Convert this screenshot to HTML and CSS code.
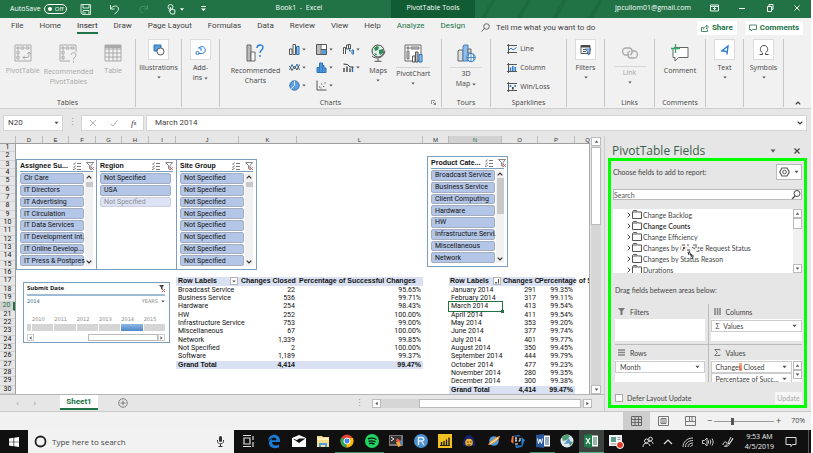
FILE: index.html
```
<!DOCTYPE html>
<html lang="en">
<head>
<meta charset="utf-8">
<meta name="viewport" content="width=device-width, initial-scale=1">
<title>Book1 - Excel</title>
<link rel="stylesheet" href="styles.css">
</head>
<body>

<!-- shared icons -->
<svg class="defs" aria-hidden="true">
	<symbol id="i-multi" viewBox="0 0 8 8"><path d="M0 1.500l1 1 1.500-2M0 4.500l1 1 1.500-2M0 7l1 .8 1.500-1.800M4 1.500h4M4 4.500h4M4 7.500h4" fill="none" stroke="#555" stroke-width=".8"/></symbol>
	<symbol id="i-clear" viewBox="0 0 8 8"><path d="M.5.5h7L5 3.500v4L3.500 6.500v-3z" fill="none" stroke="#666" stroke-width=".8"/><path d="M5 5l3 3M8 5L5 8" stroke="#d66" stroke-width=".9"/></symbol>
	<symbol id="i-folder" viewBox="0 0 10 9"><path d="M.5 8.500v-7l1-1h3l1 1.500h4v6.500z" fill="#fff" stroke="#555"/><path d="M1 2h4" stroke="#555"/></symbol>
	<symbol id="i-next" viewBox="0 0 4 6"><path d="M.7.7L3 3 .7 5.300" fill="none" stroke="#444" stroke-width="1"/></symbol>
	<symbol id="i-up" viewBox="0 0 6 4"><path d="M.7 3.300L3 1l2.300 2.300" fill="none" stroke="#333" stroke-width="1.200"/></symbol>
	<symbol id="i-down" viewBox="0 0 6 4"><path d="M.7.7L3 3 5.300.7" fill="none" stroke="#333" stroke-width="1.200"/></symbol>
	<symbol id="i-caret" viewBox="0 0 6 4"><path d="M.5.500h5L3 3.500z" fill="#555"/></symbol>
	<symbol id="i-caretup" viewBox="0 0 6 4"><path d="M.5 3.500h5L3 .5z" fill="#555"/></symbol>
	<symbol id="i-left" viewBox="0 0 4 6"><path d="M3.500.5v5L.5 3z" fill="#555"/></symbol>
	<symbol id="i-right" viewBox="0 0 4 6"><path d="M.5.500v5L3.500 3z" fill="#555"/></symbol>
</svg>

<div class="app">

<header class="titlebar">
	<div class="quick">
		<label class="autosave">AutoSave <input type="checkbox" role="switch"><span class="switch">Off</span></label>
		<button aria-label="Save"><svg width="12" height="11" viewBox="0 0 12 11"><path d="M1 .5h9.500v10H2.500L1 9zM3 .5v3.500h6V.5M3 10.500V6.500h6v4M5 10V8" fill="none" stroke="#cfe5d8"/></svg></button>
		<button aria-label="Undo"><svg width="12" height="11" viewBox="0 0 12 11"><path d="M1.500 1v4h4M1.500 5C4 1 9.500 1 9.500 5c0 2-2 3.500-4 5" fill="none" stroke="#dceee3"/></svg></button>
		<button aria-label="Redo"><svg width="12" height="11" viewBox="0 0 12 11"><path d="M9.500 1v4h-4M9.500 5C7 1 2 2 2 5c0 2 1 3 3 4" fill="none" stroke="#4a9069"/></svg></button>
		<button class="touch" aria-label="Touch mode"><svg width="9" height="11" viewBox="0 0 9 11"><circle cx="3.500" cy="3" r="2.500" fill="none" stroke="#dceee3"/><path d="M3.500 3v4L2 6.500l2 3.500h3.500L8 6 3.500 5" fill="none" stroke="#dceee3"/></svg><svg width="4" height="3" viewBox="0 0 6 4"><path d="M0 0h6L3 4z" fill="#fff"/></svg></button>
		<button aria-label="Customize"><svg width="5" height="6" viewBox="0 0 5 6"><path d="M0 .5h5" stroke="#fff"/><path d="M0 2.500h5L2.500 5z" fill="#fff"/></svg></button>
	</div>
	<h1 class="doc">Book1&nbsp; - &nbsp;Excel</h1>
	<div class="context">PivotTable Tools</div>
	<div class="stripes"></div>
	<div class="account">jpcullom01@gmail.com</div>
	<div class="window">
		<button aria-label="Ribbon display"><svg width="9" height="8" viewBox="0 0 9 8"><path d="M.5 1h8v6h-8zM.5 2.500h8M4.500 6V3.500M3 5l1.500-1.500L6 5" fill="none" stroke="#e6f2eb"/></svg></button>
		<button aria-label="Minimize"><svg width="8" height="8" viewBox="0 0 8 8"><path d="M1 4.500h6" stroke="#fff"/></svg></button>
		<button aria-label="Restore"><svg width="8" height="8" viewBox="0 0 8 8"><path d="M1.500 2.500h4v5h-4zM3 2.500v-2h4v5H5.500" fill="none" stroke="#fff"/></svg></button>
		<button aria-label="Close"><svg width="8" height="8" viewBox="0 0 8 8"><path d="M1.500 1.500l5 5M6.500 1.500l-5 5" stroke="#fff"/></svg></button>
	</div>
</header>

<nav class="tabs">
	<a href="#file">File</a>
	<a href="#home">Home</a>
	<a href="#insert" class="active">Insert</a>
	<a href="#draw">Draw</a>
	<a href="#layout">Page Layout</a>
	<a href="#formulas">Formulas</a>
	<a href="#data">Data</a>
	<a href="#review">Review</a>
	<a href="#view">View</a>
	<a href="#help">Help</a>
	<a href="#analyze" class="tool">Analyze</a>
	<a href="#design" class="tool">Design</a>
	<button class="tellme"><svg width="9" height="9" viewBox="0 0 9 9"><circle cx="5.500" cy="3.500" r="2.800" fill="none" stroke="#555" stroke-width=".9"/><path d="M3.500 5.500L.5 8.500" stroke="#555"/></svg>Tell me what you want to do</button>
	<span class="grow"></span>
	<button class="pill"><svg width="8" height="8" viewBox="0 0 8 8"><path d="M2.500 3.500h-2v4h6v-2M2.500 5.500c0-2 1.500-3 3-3V1l2 2-2 2V3.500" fill="none" stroke="#217346" stroke-width=".8"/></svg>Share</button>
	<button class="pill"><svg width="8" height="8" viewBox="0 0 8 8"><path d="M.5 1h7v4.500H3.500L2 7V5.500H.5z" fill="none" stroke="#217346" stroke-width=".8"/></svg>Comments</button>
</nav>

<section class="ribbon" aria-label="Insert">
	<div class="group">
		<div class="tools tables">
			<button class="tool-btn off"><svg width="18" height="18" viewBox="0 0 18 18"><path d="M1 1h16v16H1zM3 3h2v2H3zM7 3h3v2H7zM12 3h3v2h-3zM3 7h2v3H3zM3 12h2v3H3zM9 13.500h4c2 0 2-2 2-5M13 10l2-2 2 2M11 11.500l-2 2 2 2" fill="none" stroke="#a9a9a9"/></svg>PivotTable</button>
			<button class="tool-btn off"><svg width="19" height="19" viewBox="0 0 19 19"><path d="M11 17H1V1h16v7M3 3h2v2H3zM7 3h3v2H7zM12 3h3v2h-3zM3 7h2v3H3zM3 12h2v3H3zM12 11c0-3 5-3 5 0 0 2-2.500 2-2.500 4.500M14.500 17v1.500" fill="none" stroke="#a9a9a9"/></svg>Recommended<br>PivotTables</button>
			<button class="tool-btn off"><svg width="18" height="18" viewBox="0 0 18 18"><path d="M1 1h16v3H1z" fill="#aaa"/><path d="M1 1h16v16H1zM1 5h16M1 9h16M1 13h16M5 4v13M9 4v13M13 4v13" fill="none" stroke="#a9a9a9"/></svg>Table</button>
		</div>
		<h2>Tables</h2>
	</div>
	<div class="group">
		<button class="tool-btn boxed"><span class="box"><svg width="12" height="12" viewBox="0 0 12 12"><path d="M1 1h7v6H1z" fill="#5b9bd9" stroke="#2b73b8"/><circle cx="7.500" cy="7.500" r="3.500" fill="#fff" stroke="#555"/></svg></span>Illustrations<svg class="car"><use href="#i-caret"/></svg></button>
	</div>
	<div class="group">
		<button class="tool-btn boxed"><span class="box"><svg width="12" height="12" viewBox="0 0 12 12"><path d="M4 4a3.500 3.500 0 1 1 3.500 5.500H3M3 4h3v3" fill="none" stroke="#2b7cd3"/><circle cx="2.500" cy="9" r="1.600" fill="#fff" stroke="#2b7cd3"/></svg></span>Add-<br><span class="word">ins <svg class="car"><use href="#i-caret"/></svg></span></button>
	</div>
	<div class="group">
		<div class="tools charts">
			<button class="tool-btn"><svg width="18" height="18" viewBox="0 0 18 18"><path d="M1 1h4v16H1z" fill="#bbb" stroke="#666"/><path d="M5 8h4v9H5z" fill="#fff" stroke="#666"/><path d="M11 4c0-4 6-4 6-.500 0 2.500-3 2.500-3 5.500M14 11v2" fill="none" stroke="#2b7cd3" stroke-width="1.400"/></svg>Recommended<br>Charts</button>
			<div class="minis">
				<button aria-label="Column chart"><svg width="11" height="11" viewBox="0 0 11 11"><path d="M.5 5h2.500v5.500H.5z" fill="#fff" stroke="#555"/><path d="M4 .5h2.500v10H4z" fill="#fff" stroke="#555"/><path d="M7.500 2.500H10v8H7.500z" fill="#8dbdec" stroke="#2b73b8"/></svg><svg class="car"><use href="#i-caret"/></svg></button>
				<button aria-label="Hierarchy chart"><svg width="11" height="11" viewBox="0 0 11 11"><path d="M.5.5h10v10H.5z" fill="#fff" stroke="#555"/><path d="M1 1h3.500v9H1z" fill="#bbb"/><path d="M5.500 6H10v4H5.500z" fill="#5b9bd9"/><path d="M5 .5v10M5 5.500h5.500" stroke="#555"/></svg><svg class="car"><use href="#i-caret"/></svg></button>
				<button aria-label="Waterfall chart"><svg width="11" height="11" viewBox="0 0 11 11"><path d="M.5 10V3.500H2.500V10M3.500 1h2v4h-2z" fill="#fff" stroke="#555"/><path d="M6.500 4v3H8M9 6h1.500v4H9z" fill="none" stroke="#2b73b8"/><path d="M5 .5h2.500V5" fill="none" stroke="#555"/></svg><svg class="car"><use href="#i-caret"/></svg></button>
				<button aria-label="Line chart"><svg width="11" height="11" viewBox="0 0 11 11"><path d="M.5 8L3 2.500 5.500 7 8 2l2.500 6" fill="none" stroke="#2b73b8"/><path d="M.5 4L3 8.500 5.500 4 8 8l2.500-5.500" fill="none" stroke="#555"/></svg><svg class="car"><use href="#i-caret"/></svg></button>
				<button aria-label="Statistic chart"><svg width="11" height="11" viewBox="0 0 11 11"><path d="M1 10.500V5.500h2.500V1h3v2.500H8V6h2v4.500z" fill="#4f95dc" stroke="#2b73b8"/><path d="M3.500 5v5M6.500 4v6" stroke="#2b73b8" stroke-width=".7"/></svg><svg class="car"><use href="#i-caret"/></svg></button>
				<button aria-label="Combo chart"><svg width="11" height="11" viewBox="0 0 11 11"><path d="M1 10V6M4 10V4.500M7 10V6.500" stroke="#777" stroke-width="2"/><path d="M9.500 10V5" stroke="#2b73b8" stroke-width="1.500"/><path d="M.5 2l4 .5L7 5l3.500 0" fill="none" stroke="#333"/></svg><svg class="car"><use href="#i-caret"/></svg></button>
				<button aria-label="Pie chart"><svg width="11" height="11" viewBox="0 0 11 11"><circle cx="5.500" cy="5.500" r="4.700" fill="#5ba0e4" stroke="#3b6ea5"/><path d="M5.500.8v4.700L2 8.800" fill="none" stroke="#fff" stroke-width=".8"/></svg><svg class="car"><use href="#i-caret"/></svg></button>
				<button aria-label="Scatter chart"><svg width="11" height="11" viewBox="0 0 11 11"><path d="M1 .5v9.500h9.500" fill="none" stroke="#555"/><path d="M3 7h1.200M5 4h1.200M7 6.500h1.200M8.500 3h1.200M4.500 8h1" stroke="#555" stroke-width="1.200"/></svg><svg class="car"><use href="#i-caret"/></svg></button>
			</div>
			<button class="tool-btn"><svg width="18" height="18" viewBox="0 0 18 18"><circle cx="9" cy="7" r="6" fill="#dff0e6" stroke="#444"/><path d="M5 4l3-2 2 1-1 3-3 1zM10 6l4-1v4l-3 2-1-2zM5 9l3 1-1 2z" fill="#2e8b57"/><path d="M3 12c4 4 12 2 13-5M9 14.500V17M5.500 17.300h7" fill="none" stroke="#555"/></svg>Maps<svg class="car"><use href="#i-caret"/></svg></button>
			<button class="tool-btn split"><svg width="19" height="19" viewBox="0 0 19 19"><path d="M1 1h16v16H1z" fill="#fff" stroke="#666"/><path d="M3 3h2v2H3zM7 3h8v2H7zM3 7h2v8H3z" fill="#ccc" stroke="#777"/><path d="M8.500 12H11v6H8.500z" fill="#fff" stroke="#555"/><path d="M11.500 8H14v10h-2.500z" fill="#bbb" stroke="#555"/><path d="M15 10.500h3V18h-3z" fill="#8dbdec" stroke="#2b73b8"/></svg><span>PivotChart</span><svg class="car"><use href="#i-caret"/></svg></button>
		</div>
		<h2>Charts</h2>
		<button class="launch" aria-label="Chart options"><svg width="5" height="5" viewBox="0 0 5 5"><path d="M.5 4V.5H4M2 2l2.500 2.500M4.500 2.500v2h-2" fill="none" stroke="#666" stroke-width=".7"/></svg></button>
	</div>
	<div class="group">
		<button class="tool-btn split"><svg width="19" height="19" viewBox="0 0 19 19"><path d="M1 7l1-1h4v11H1z" fill="#ddd" stroke="#666"/><path d="M6 2l1-1h4v16H6z" fill="#8dbdec" stroke="#4b7eb2"/><path d="M11 5h3v4h-3z" fill="#ddd" stroke="#666"/><circle cx="14" cy="13.500" r="4.200" fill="#fff" stroke="#2b73b8"/><path d="M10 13.500h8M14 9.500v8M12 10c-1 3-1 5 0 7M16 10c1 3 1 5 0 7" fill="none" stroke="#2b73b8" stroke-width=".8"/></svg><span>3D</span><span class="word">Map <svg class="car"><use href="#i-caret"/></svg></span></button>
		<h2>Tours</h2>
	</div>
	<div class="group">
		<div class="sparks">
			<button><svg width="10" height="10" viewBox="0 0 10 10"><path d="M0 1.500h10M0 8.500h10M1.500 0v10" stroke="#555"/><path d="M2 6l2-2 2 2 3.500-2.500" fill="none" stroke="#2b7cd3"/></svg>Line</button>
			<button><svg width="10" height="10" viewBox="0 0 10 10"><path d="M0 1.500h10M0 8.500h10M1.500 0v10" stroke="#555"/><path d="M3.500 8V4.500M5.800 8V3M8.200 8V4" stroke="#2b7cd3" stroke-width="1.500"/></svg>Column</button>
			<button><svg width="10" height="10" viewBox="0 0 10 10"><path d="M0 1.500h10M0 8.500h10M1.500 0v10" stroke="#555"/><path d="M3.500 5V3M8.200 5V3" stroke="#2b7cd3" stroke-width="1.500"/><path d="M5.800 7.500V5" stroke="#333" stroke-width="1.500"/></svg>Win/Loss</button>
		</div>
		<h2>Sparklines</h2>
	</div>
	<div class="group">
		<button class="tool-btn boxed"><span class="box"><svg width="12" height="12" viewBox="0 0 12 12"><path d="M1 1.500h9v8H1z" fill="#fff" stroke="#555"/><path d="M1 2.500h9" stroke="#444" stroke-width="2"/><path d="M3 5.500h3M3 7.500h3" stroke="#555"/><path d="M5 5h6L9 7.500V11L7.500 10V7.500z" fill="#9cc3ee" stroke="#2b5f9e" stroke-width=".8"/></svg></span>Filters<svg class="car"><use href="#i-caret"/></svg></button>
	</div>
	<div class="group">
		<button class="tool-btn split off"><svg width="18" height="18" viewBox="0 0 18 18"><path d="M8 11H5a3.500 3.500 0 0 1 0-7h3c4 0 4 6 1 7M10 7h3a3.500 3.500 0 0 1 0 7h-3c-4 0-4-6-1-7" fill="none" stroke="#a9a9a9" stroke-width="1.300"/></svg><span>Link</span><svg class="car"><use href="#i-caret"/></svg></button>
		<h2>Links</h2>
	</div>
	<div class="group">
		<button class="tool-btn"><svg width="18" height="18" viewBox="0 0 18 18"><path d="M3 3.500h14v10H7.500L4 17v-3.500H2V5" fill="#fff" stroke="#666"/><path d="M4.500 0v9M0 4.500h9" stroke="#35a76b" stroke-width="1.300"/></svg>Comment</button>
		<h2>Comments</h2>
	</div>
	<div class="group">
		<button class="tool-btn boxed"><span class="box"><svg width="12" height="12" viewBox="0 0 12 12"><path d="M2 7.500L9 2 8 10.500M3 6.500l5.500 1.500" fill="none" stroke="#2b7cd3" stroke-width="1.400"/></svg></span>Text<svg class="car"><use href="#i-caret"/></svg></button>
	</div>
	<div class="group">
		<button class="tool-btn boxed"><span class="box"><svg width="12" height="12" viewBox="0 0 12 12"><path d="M1.500 10.500H4.500V9C1 6.500 2 1.500 6 1.500S11 6.500 7.500 9v1.500h3" fill="none" stroke="#444"/></svg></span>Symbols<svg class="car"><use href="#i-caret"/></svg></button>
	</div>
	<div class="collapse"><button aria-label="Collapse ribbon"><svg width="6" height="4"><use href="#i-up"/></svg></button></div>
</section>

<div class="formula">
	<div class="namebox"><input value="N20" aria-label="Name box"><svg width="5" height="4"><use href="#i-caret"/></svg></div>
	<span class="dots">⋮</span>
	<div class="fx">
		<button aria-label="Cancel"><svg width="8" height="8" viewBox="0 0 8 8"><path d="M1 1l6 6M7 1L1 7" stroke="#b5b5b5"/></svg></button>
		<button aria-label="Enter"><svg width="8" height="8" viewBox="0 0 8 8"><path d="M.5 4.500L3 7l4.500-6" fill="none" stroke="#b5b5b5"/></svg></button>
		<button aria-label="Insert function"><i>f</i><small>x</small></button>
	</div>
	<div class="content"><input value="March 2014" aria-label="Formula"><svg width="6" height="4"><use href="#i-down"/></svg></div>
</div>

<main class="work">
	<div class="book">
		<div class="colheads">
			<span class="corner"></span><span>D</span><span>E</span><span>F</span><span>G</span><span>H</span><span>I</span><span>J</span><span>K</span><span>L</span><span>M</span><span class="sel">N</span><span>O</span><span>P</span><span class="cut">Q</span>
		</div>
		<div class="sheet">
			<ol class="rowheads">
				<li>1</li><li>2</li><li>3</li><li>4</li><li>5</li><li>6</li><li>7</li><li>8</li><li>9</li><li>10</li>
				<li>11</li><li>12</li><li>13</li><li>14</li><li>15</li><li>16</li><li>17</li><li>18</li><li>19</li><li class="sel">20</li>
				<li>21</li><li>22</li><li>23</li><li>24</li><li>25</li><li>26</li><li>27</li><li>28</li><li>29</li><li>30</li>
			</ol>

			<table class="pivot category">
				<thead><tr><th>Row Labels<button class="drop" aria-label="Filter"><svg width="4" height="3"><use href="#i-caret"/></svg></button></th><th>Changes Closed</th><th>Percentage of Successful Changes</th></tr></thead>
				<tbody>
					<tr><td>Broadcast Service</td><td>22</td><td>95.65%</td></tr>
					<tr><td>Business Service</td><td>536</td><td>99.71%</td></tr>
					<tr><td>Hardware</td><td>254</td><td>98.43%</td></tr>
					<tr><td>HW</td><td>252</td><td>100.00%</td></tr>
					<tr><td>Infrastructure Service</td><td>753</td><td>99.00%</td></tr>
					<tr><td>Miscellaneous</td><td>67</td><td>100.00%</td></tr>
					<tr><td>Network</td><td>1,339</td><td>99.85%</td></tr>
					<tr><td>Not Specified</td><td>2</td><td>100.00%</td></tr>
					<tr><td>Software</td><td>1,189</td><td>99.37%</td></tr>
				</tbody>
				<tfoot><tr><th>Grand Total</th><td>4,414</td><td>99.47%</td></tr></tfoot>
			</table>

			<table class="pivot month">
				<thead><tr><th>Row Labels<button class="drop" aria-label="Sort and filter"><svg width="4" height="5" viewBox="0 0 4 5"><path d="M0 3l1 1.500L2 3M3.500 0v4.500" fill="none" stroke="#444" stroke-width=".9"/></svg></button></th><th>Changes C</th><th>Percentage of S</th></tr></thead>
				<tbody>
					<tr><td>January 2014</td><td>291</td><td>99.35%</td></tr>
					<tr><td>February 2014</td><td>317</td><td>99.11%</td></tr>
					<tr><td class="current">March 2014</td><td>413</td><td>99.54%</td></tr>
					<tr><td>April 2014</td><td>411</td><td>99.54%</td></tr>
					<tr><td>May 2014</td><td>353</td><td>99.20%</td></tr>
					<tr><td>June 2014</td><td>377</td><td>99.74%</td></tr>
					<tr><td>July 2014</td><td>401</td><td>99.77%</td></tr>
					<tr><td>August 2014</td><td>350</td><td>99.45%</td></tr>
					<tr><td>September 2014</td><td>444</td><td>99.79%</td></tr>
					<tr><td>October 2014</td><td>477</td><td>99.23%</td></tr>
					<tr><td>November 2014</td><td>280</td><td>99.35%</td></tr>
					<tr><td>December 2014</td><td>300</td><td>99.38%</td></tr>
				</tbody>
				<tfoot><tr><th>Grand Total</th><td>4,414</td><td>99.47%</td></tr></tfoot>
			</table>

			<!-- slicers float over the cells -->
			<section class="slicer assignee">
				<header><h3>Assignee Su...</h3><svg width="8" height="8"><use href="#i-multi"/></svg><svg width="8" height="8"><use href="#i-clear"/></svg></header>
				<div class="items">
					<button>Cir Care</button><button>IT Directors</button><button>IT Advertising</button><button>IT Circulation</button><button>IT Data Services</button><button>IT Development Int...</button><button>IT Online Develop...</button><button>IT Press &amp; Postpress</button>
				</div>
				<div class="bar"><svg width="6" height="4"><use href="#i-up"/></svg><i></i><svg width="6" height="4"><use href="#i-down"/></svg></div>
			</section>
			<section class="slicer region">
				<header><h3>Region</h3><svg width="8" height="8"><use href="#i-multi"/></svg><svg width="8" height="8"><use href="#i-clear"/></svg></header>
				<div class="items">
					<button>Not Specified</button><button>USA</button><button class="none">Not Specified</button>
				</div>
			</section>
			<section class="slicer site">
				<header><h3>Site Group</h3><svg width="8" height="8"><use href="#i-multi"/></svg><svg width="8" height="8"><use href="#i-clear"/></svg></header>
				<div class="items">
					<button>Not Specified</button><button>Not Specified</button><button>Not Specified</button><button>Not Specified</button><button>Not Specified</button><button>Not Specified</button><button>Not Specified</button><button>Not Specified</button>
				</div>
				<div class="bar"><svg width="6" height="4"><use href="#i-up"/></svg><i></i><svg width="6" height="4"><use href="#i-down"/></svg></div>
			</section>
			<section class="slicer product">
				<header><h3>Product Cate...</h3><svg width="8" height="8"><use href="#i-multi"/></svg><svg width="8" height="8"><use href="#i-clear"/></svg></header>
				<div class="items">
					<button>Broadcast Service</button><button>Business Service</button><button>Client Computing</button><button>Hardware</button><button>HW</button><button>Infrastructure Servi...</button><button>Miscellaneous</button><button>Network</button>
				</div>
				<div class="bar long"><svg width="6" height="4"><use href="#i-up"/></svg><i></i><svg width="6" height="4"><use href="#i-down"/></svg></div>
			</section>

			<section class="timeline">
				<header><h3>Submit Date</h3><svg width="6" height="7" viewBox="0 0 6 7"><path d="M0 0h5L3.500 2.500V5L2 4V2.500z" fill="#444"/><path d="M3 4l3 3M6 4L3 7" stroke="#c55"/></svg></header>
				<p><b>2014</b><button>YEARS <svg width="4" height="3"><use href="#i-caret"/></svg></button></p>
				<div class="years"><span></span><span>2010</span><span>2011</span><span>2012</span><span>2013</span><span>2014</span><span>2015</span></div>
				<div class="years blocks"><i></i><i></i><i></i><i></i><i></i><i class="on"></i><i></i></div>
				<div class="scroll"><button aria-label="Earlier"><svg width="3" height="4"><use href="#i-left"/></svg></button><i></i><button aria-label="Later"><svg width="3" height="4"><use href="#i-right"/></svg></button></div>
			</section>
		</div>
		<div class="vscroll"><button aria-label="Up"><svg width="5" height="3"><use href="#i-caretup"/></svg></button><i></i><button aria-label="Down"><svg width="5" height="3"><use href="#i-caret"/></svg></button></div>
		<footer class="sheettabs">
			<button class="nav" aria-label="Previous sheet">‹</button>
			<button class="nav" aria-label="Next sheet">›</button>
			<button class="sheet1">Sheet1</button>
			<button class="add" aria-label="New sheet"><svg width="10" height="10" viewBox="0 0 10 10"><circle cx="5" cy="5" r="4.300" fill="none" stroke="#666" stroke-width=".8"/><path d="M2.500 5h5M5 2.500v5" stroke="#666" stroke-width=".8"/></svg></button>
			<span class="grow"></span>
			<span class="dots">⋮</span>
			<div class="hscroll"><button aria-label="Left"><svg width="3" height="5"><use href="#i-left"/></svg></button><i></i><button aria-label="Right"><svg width="3" height="5"><use href="#i-right"/></svg></button></div>
		</footer>
	</div>

	<aside class="pane">
		<header><h2>PivotTable Fields</h2><button aria-label="Options"><svg width="6" height="4"><use href="#i-caret"/></svg></button><button aria-label="Close pane"><svg width="6" height="6" viewBox="0 0 6 6"><path d="M.5.500l5 5M5.500.5l-5 5" stroke="#444" stroke-width="1.200"/></svg></button></header>
		<div class="frame">
			<div class="choose"><span>Choose fields to add to report:</span><button aria-label="Tools"><svg width="11" height="10" viewBox="0 0 11 10"><path d="M3 1h5l2.300 4L8 9H3L.7 5z" fill="none" stroke="#555" stroke-width="1.200"/><circle cx="5.500" cy="5" r="1.800" fill="none" stroke="#555"/></svg><svg width="5" height="4"><use href="#i-caret"/></svg></button></div>
			<div class="search"><input placeholder="Search" aria-label="Search fields"><svg width="10" height="9" viewBox="0 0 10 9"><circle cx="6" cy="3.500" r="3" fill="none" stroke="#444"/><path d="M4 6L1 9" stroke="#444" stroke-width="1.300"/></svg></div>
			<div class="fields">
				<ul>
					<li><svg width="4" height="6"><use href="#i-next"/></svg><svg width="10" height="9"><use href="#i-folder"/></svg>Change Backlog</li>
					<li class="used"><svg width="4" height="6"><use href="#i-next"/></svg><svg width="10" height="9"><use href="#i-folder"/></svg>Change Counts</li>
					<li><svg width="4" height="6"><use href="#i-next"/></svg><svg width="10" height="9"><use href="#i-folder"/></svg>Change Efficiency</li>
					<li><svg width="4" height="6"><use href="#i-next"/></svg><svg width="10" height="9"><use href="#i-folder"/></svg>Changes by Change Request Status</li>
					<li><svg width="4" height="6"><use href="#i-next"/></svg><svg width="10" height="9"><use href="#i-folder"/></svg>Changes by Status Reason</li>
					<li><svg width="4" height="6"><use href="#i-next"/></svg><svg width="10" height="9"><use href="#i-folder"/></svg>Durations</li>
				</ul>
				<div class="sb"><button aria-label="Up"><svg width="5" height="3"><use href="#i-caretup"/></svg></button><i></i><button aria-label="Down"><svg width="5" height="3"><use href="#i-caret"/></svg></button></div>
				<svg class="pointer" width="18" height="16" viewBox="0 0 18 16"><path d="M0 0h17v7H0z" fill="#fff" opacity=".8"/><path d="M1 1h3M6 1h2M12 1h4M2 3l2 2M4 3L2 5M11 3l3 2M14 3h2M1 6h2M6 6h3" stroke="#555"/><path d="M8 7l3 6M7 8l1 3M9 11c3-1 4 1 2 4" fill="none" stroke="#222"/></svg>
			</div>
			<p>Drag fields between areas below:</p>
			<div class="areas">
				<section><h3><svg width="7" height="7" viewBox="0 0 7 7"><path d="M0 0h7L4.500 3v4h-2V3z" fill="#777"/></svg>Filters</h3><div class="zone"></div></section>
				<section><h3><svg width="7" height="7" viewBox="0 0 7 7"><path d="M1 0v7M3.500 0v7M6 0v7" stroke="#888" stroke-width="1.600"/></svg>Columns</h3><div class="zone"><button><span>Σ&nbsp; Values</span><svg width="5" height="4"><use href="#i-caret"/></svg></button></div></section>
				<section><h3><svg width="7" height="7" viewBox="0 0 7 7"><path d="M0 1h7M0 3.500h7M0 6h7" stroke="#888" stroke-width="1.500"/></svg>Rows</h3><div class="zone"><button><span>Month</span><svg width="5" height="4"><use href="#i-caret"/></svg></button></div></section>
				<section><h3><svg width="7" height="7" viewBox="0 0 7 7"><path d="M6 1.500V.5H.7L3.500 3.500.7 6.500H6v-1" fill="none" stroke="#777"/></svg>Values</h3><div class="zone two"><button><span>Change<em>s</em> Closed</span><svg width="5" height="4"><use href="#i-caret"/></svg></button><button><span>Percentage of Succ...</span><svg width="5" height="4"><use href="#i-caret"/></svg></button><div class="sb"><button aria-label="Up"><svg width="5" height="3"><use href="#i-caretup"/></svg></button><button aria-label="Down"><svg width="5" height="3"><use href="#i-caret"/></svg></button></div></div></section>
			</div>
			<div class="defer"><label><input type="checkbox">Defer Layout Update</label><button disabled>Update</button></div>
		</div>
	</aside>
</main>

<footer class="status">
	<button class="on" aria-label="Normal"><svg width="11" height="10" viewBox="0 0 11 10"><path d="M.5.5h10v9H.5zM.5 3.500h10M.5 6.500h10M4 0v10M7.500 0v10" fill="none" stroke="#666"/></svg></button>
	<button aria-label="Page layout"><svg width="11" height="10" viewBox="0 0 11 10"><path d="M.5.5h10v9H.5zM3 2.500h5v5H3zM4 4h3M4 6h3" fill="none" stroke="#777"/></svg></button>
	<button aria-label="Page break"><svg width="11" height="10" viewBox="0 0 11 10"><path d="M.5.5h10v9H.5zM4.500 .5v5h6M.5 5.500h4M7 0v5" fill="none" stroke="#777"/></svg></button>
	<div class="zoom"><span>−</span><input type="range" min="10" max="190" value="64" aria-label="Zoom"><span>+</span></div>
	<span class="percent">70%</span>
</footer>

<footer class="taskbar">
	<button class="start" aria-label="Start"><svg width="10" height="10" viewBox="0 0 10 10"><path d="M0 1.500l4.500-.700V4.700H0zM5.200.7L10 0v4.700H5.200zM0 5.300h4.500v3.900L0 8.500zM5.200 5.300H10V10l-4.800-.700z" fill="#fff"/></svg></button>
	<label class="find"><svg width="13" height="13" viewBox="0 0 13 13"><circle cx="6.500" cy="6.500" r="5" fill="none" stroke="#222" stroke-width="1.800"/></svg><input placeholder="Type here to search"><svg width="7" height="11" viewBox="0 0 7 11"><rect x="2" y="0" width="3" height="6" rx="1.500" fill="#333"/><path d="M.5 4v1.500c0 3 6 3 6 0V4M3.500 8v2M1.500 10.500h4" fill="none" stroke="#333"/></svg></label>
	<div class="apps">
		<button aria-label="Task view"><svg viewBox="0 0 16 16"><path d="M4 5h6v6H4zM3 2.500h8M3 13.500h8M13 3v4M13 9v5" fill="none" stroke="#ddd" stroke-width="1.200"/></svg></button>
		<button aria-label="Edge"><svg viewBox="0 0 16 16"><path d="M2 8c1-9 13-8 12 1H6c0 4 5 4 7 2.500v2.700C8 17 2 14 3 9c.3-2 2-3 4-4-1 1-1.500 1.500-1.500 2.300h5C10.500 3 5 4 2 8z" fill="#1b7bd6"/></svg></button>
		<button aria-label="Mail"><svg viewBox="0 0 16 16"><path d="M1 5l7-3 7 3v9H1z" fill="#fff"/><path d="M1.500 5.500L8 10l6.500-4.500H8L6 7z" fill="#111"/></svg></button>
		<button aria-label="Explorer"><svg viewBox="0 0 16 16"><path d="M2 3h5l1 1h6v10H2z" fill="#f7dc8b"/><path d="M2 5h12v2H2z" fill="#fdf0b8"/><path d="M4 10h8v4h-2v-2H6v2H4z" fill="#4ba3dd"/></svg></button>
		<button class="run" aria-label="Chrome"><svg viewBox="0 0 16 16"><circle cx="8" cy="8" r="6.500" fill="#e34133"/><path d="M8 8L2.500 4.500A6.500 6.500 0 0 0 7.500 14.500z" fill="#34a853"/><path d="M8 8h6.500a6.500 6.500 0 0 1-7 6.500z" fill="#fbbc05"/><path d="M8 5h6l.5 3H8z" fill="#fbbc05"/><circle cx="8" cy="8" r="3" fill="#4285f4" stroke="#fff"/></svg></button>
		<button class="run" aria-label="Spotify"><svg viewBox="0 0 16 16"><circle cx="8" cy="8" r="7" fill="#1ed760"/><path d="M4 5.800c3-1 6-.6 8.500.7M4.500 8.300c2.500-.8 5-.4 7 .6M5 10.600c2-.6 4-.3 5.500.5" fill="none" stroke="#111" stroke-width="1.300"/></svg></button>
		<button aria-label="Console"><svg viewBox="0 0 16 16"><path d="M1 2h14v11H1z" fill="#777"/><path d="M2 3h11v8H2z" fill="#333"/><path d="M3 4l3 2-3 2" fill="none" stroke="#eee"/><path d="M9 5l4 3-3 2-2-2z" fill="#e8573f"/><path d="M8 9l4 0 1 4-3 1z" fill="#f3a43b"/><path d="M13 7l2 2-2 3-1-3z" fill="#4d90e0"/></svg></button>
		<button aria-label="RStudio"><svg viewBox="0 0 16 16"><circle cx="8" cy="8" r="7" fill="#4d91cf"/><path d="M5.500 12V4.500h3c3 0 3 3.500 0 3.500h-3M8.500 8l2.500 4" fill="none" stroke="#dceafa" stroke-width="1.400"/></svg></button>
		<button aria-label="Power BI"><svg viewBox="0 0 16 16"><path d="M1 1h14v14H1z" fill="#f2c021"/><path d="M4.500 12v-3M7 12V8M9.500 12V6.500M12 12V4.500" stroke="#222" stroke-width="1.400"/><path d="M3 12.500h10" stroke="#222"/></svg></button>
		<button aria-label="Navigator"><svg viewBox="0 0 16 16"><path d="M2 13C2 5 5 2 8 2s6 3 6 11z" fill="#17206a"/><circle cx="8" cy="9.500" r="3.800" fill="#f0b33a"/><path d="M6 9h1.500M9 9h1.500M6.500 12h3" stroke="#222"/></svg></button>
		<button aria-label="Planet"><svg viewBox="0 0 16 16"><circle cx="8" cy="8" r="4.800" fill="#4b9ae0"/><path d="M2 12C4 8 9 4 14 3c0 3-7 9-12 9z" fill="#f39a35"/><path d="M4 11l8-6" stroke="#fff"/></svg></button>
		<button aria-label="IntelliJ"><svg viewBox="0 0 16 16"><path d="M2 3l7-1 6 5-3 7-6 1z" fill="#2a79c8"/><path d="M2 3l5 1-3 7-3-2z" fill="#f07a3e"/><path d="M3.500 3.500h8v9h-8z" fill="#111"/><path d="M5 5h2M6 5v3M5 8h2M10 5v3H8.500M5 11h3" stroke="#fff" fill="none"/></svg></button>
		<button class="run" aria-label="Word"><svg viewBox="0 0 16 16"><path d="M8 2.500h7v11H8z" fill="#fff"/><path d="M10 5h4M10 7h4M10 9h4M10 11h4" stroke="#2b579a"/><path d="M1 2l8-1v14l-8-1z" fill="#2b579a"/><path d="M2.500 5.500l1 5L5 6l1.500 4.500 1-5" fill="none" stroke="#fff"/></svg></button>
		<button aria-label="Globe"><svg viewBox="0 0 16 16"><circle cx="8" cy="8" r="6.500" fill="#dbe9ee"/><path d="M3 4c3-3 7-2 8-1L8 7 4 8zM9 8l5 1-3 4z" fill="#4f9c72"/><path d="M5 11l5-6 2 5z" fill="#5d92c9"/></svg></button>
		<button class="cur" aria-label="Excel"><svg viewBox="0 0 16 16"><path d="M8 2.500h7v11H8z" fill="#fff"/><path d="M10 5h4M10 7h4M10 9h4M10 11h4" stroke="#217346"/><path d="M1 2l8-1v14l-8-1z" fill="#1f7a49"/><path d="M3 5l4 6M7 5l-4 6" stroke="#fff" stroke-width="1.300"/></svg></button>
		<button class="rec" aria-label="Recorder"><svg viewBox="0 0 16 16"><path d="M1 2h13v11H1z" fill="#eef3f5"/><path d="M3 4h5v5H3z" fill="#5b9d8b"/><path d="M9.500 4.500h3M9.500 6.500h3M3 11h5" stroke="#999"/><circle cx="12" cy="12" r="3.500" fill="#d8392b" stroke="#fff"/></svg></button>
	</div>
	<span class="grow"></span>
	<div class="tray">
		<svg viewBox="0 0 12 12"><circle cx="4.500" cy="5" r="2" fill="none" stroke="#ddd"/><circle cx="8.500" cy="3" r="1.800" fill="none" stroke="#ddd"/><path d="M1 11c0-5 6-5 7-1M7 6c2-2 4 0 4 2" fill="none" stroke="#ddd"/></svg>
		<svg viewBox="0 0 12 12"><path d="M2 8l4-4 4 4" fill="none" stroke="#ddd" stroke-width="1.200"/></svg>
		<svg viewBox="0 0 12 12"><path d="M1 11C1 6 5 2 11 2M3.500 11c0-4 3-6.500 7.500-6.500M6 11c0-2.500 2-4 5-4M8.500 11c0-1 1-2 2.500-2" fill="none" stroke="#ccc"/></svg>
		<svg viewBox="0 0 12 12"><path d="M.5 4.500h2L5 2v8L2.500 7.500h-2zM6.500 4.500v3M8 3.500c1 2 1 3 0 5M10 2.500c1.500 2.500 1.500 4.500 0 7" fill="none" stroke="#ccc"/></svg>
		<svg viewBox="0 0 12 12"><path d="M1 9c0-3 3-4 4-2s-2 4-3 3M3 10c3 1 4-1 5-3l3-5M9 1l-3 6 1 1 4-5" fill="none" stroke="#ddd"/></svg>
		<time>9:53 AM<br>4/5/2019</time>
		<svg viewBox="0 0 12 12"><path d="M1 1.500h10v7H7.500L6 10.500V8.500H1z" fill="none" stroke="#ddd"/></svg>
	</div>
</footer>

</div>
</body>
</html>
```
FILE: styles.css
```
:root {
	--green  : #217346;
	--chrome : #f1f1f1;
	--grey   : #e6e6e6;
	--line   : #c6c6c6;
	--text   : #444;
	--ui     : "Open Sans", "Noto Sans", sans-serif;
	--tabs   : Roboto, "Open Sans", sans-serif;
	--cells  : Roboto, "Liberation Sans", sans-serif;
	--cols   : 16px 27px 26px 27px 26px 27px 27px 63px 58px 126px 26px 53px 36px 37px 1fr;
}
* {
	box-sizing : border-box;
	margin     : 0;
	padding    : 0;
}
body {
	background  : #fff;
	color       : var(--text);
	font-family : var(--ui);
	font-size   : 7px;
	line-height : 10px;
}
button, input {
	background : none;
	border     : 0;
	color      : inherit;
	font       : inherit;
	outline    : 0;
}
h1, h2, h3 {
	font-size   : inherit;
	font-weight : normal;
}
a {
	color           : inherit;
	text-decoration : none;
}
svg {
	display     : block;
	flex-shrink : 0;
}
button {
	display         : flex;
	align-items     : center;
	justify-content : center;
	white-space     : nowrap;
}
.defs {
	position : absolute;
	width    : 0;
	height   : 0;
}
.grow {
	flex : 1;
}
.app {
	display        : flex;
	flex-direction : column;
	min-height     : 100vh;
	margin-right   : 2px;
	background     : var(--grey);
}

/* title bar */
.titlebar {
	display               : grid;
	grid-template-columns : 207px 184px 84px 1fr 76px 120px;
	height                : 18px;
	background            : var(--green);
	color                 : #fff;
	line-height           : 16px;
	text-align            : center;
}
.quick {
	display      : flex;
	align-items  : center;
	gap          : 17px;
	padding-left : 10px;
}
.quick button { height : 16px; }
.autosave {
	display     : flex;
	align-items : center;
	gap         : 3px;
	margin-right : -4px;
}
.autosave input {
	position : absolute;
	opacity  : 0;
}
.switch {
	position      : relative;
	width         : 23px;
	height        : 10px;
	padding-left  : 8px;
	border        : 1px solid #fff;
	border-radius : 5px;
	font-size     : 6px;
	line-height   : 8px;
}
.switch::before {
	content       : "";
	position      : absolute;
	left          : 3px;
	top           : 2px;
	width         : 4px;
	height        : 4px;
	border-radius : 50%;
	background    : #fff;
}
.touch { gap : 4px; }
.context { background : #125c33; }
.stripes {
	background : repeating-linear-gradient(120deg, transparent 0 14px, #1c6a3e 14px 18px, transparent 18px 31px);
}
.window {
	display         : flex;
	align-items     : center;
	justify-content : space-between;
	padding         : 0 10px 2px 19px;
}

/* ribbon tabs */
.tabs {
	display     : flex;
	align-items : center;
	height      : 19px;
	gap         : 16px;
	padding     : 0 8px 0 11px;
	background  : var(--chrome);
	font-family : var(--tabs);
	font-size   : 8px;
	white-space : nowrap;
}
.tabs a {
	padding-bottom : 1px;
	border-bottom  : 2px solid transparent;
}
.tabs .active {
	border-color : var(--green);
	color        : #222;
}
.tabs .tool { color : var(--green); }
.tellme { gap : 6px; }
.pill {
	gap         : 3px;
	height      : 14px;
	padding     : 0 4px;
	margin-left : -8px;
	background  : #fff;
	color       : var(--green);
	font-weight : bold;
}

/* ribbon */
.ribbon {
	display               : grid;
	grid-template-columns : 136px 46px 38px 222px 49px 76px 38px 50px 51px 38px 40px 1fr;
	height                : 72px;
	padding-top           : 2px;
	background            : var(--chrome);
	border-bottom         : 1px solid #cfcfcf;
}
.group {
	position       : relative;
	display        : flex;
	flex-direction : column;
	align-items    : center;
	margin-bottom  : 1px;
	border-right   : 1px solid var(--line);
}
.group h2 {
	margin-top  : auto;
	line-height : 9px;
}
.tools {
	display     : flex;
	align-items : flex-start;
}
.tables {
	gap : 4px;
}
.tool-btn {
	flex-direction : column;
	min-width      : 32px;
	padding-top    : 5px;
}
.tool-btn > svg:first-child { margin-bottom : 4px; }
.off { color : #a6a6a6; }
.boxed { padding-top : 0; }
.box {
	display         : flex;
	align-items     : center;
	justify-content : center;
	width           : 21px;
	height          : 21px;
	margin-bottom   : 3px;
	background      : #fff;
	border          : 1px solid #dcdcdc;
}
.word {
	display     : flex;
	align-items : center;
	gap         : 2px;
}
.car {
	width  : 4px;
	height : 3px;
}
.tool-btn > .car { margin-top : 3px; }
.split > span:nth-child(2) {
	width      : 100%;
	padding    : 1px 0 0;
	border-top : 1px solid #d5d5d5;
}
.charts {
	gap : 2px;
}
.minis {
	display               : grid;
	grid-template-columns : 21px 21px 17px;
	gap                   : 7px 6px;
	padding-top           : 5px;
	margin-left           : 7px;
}
.minis button {
	gap             : 2px;
	justify-content : flex-start;
}
.launch {
	position : absolute;
	right    : 5px;
	bottom   : 2px;
}
.sparks {
	display     : grid;
	gap         : 9px;
	padding-top : 5px;
}
.sparks button {
	justify-content : flex-start;
	gap             : 3px;
}
.collapse {
	display         : flex;
	align-items     : flex-end;
	justify-content : center;
	padding-bottom  : 3px;
}

/* formula bar */
.formula {
	display               : grid;
	grid-template-columns : 60px 18px 65px 1fr;
	height                : 16px;
	margin                : 6px 4px 5px 3px;
	font-family           : var(--tabs);
	font-size             : 8px;
}
.formula > div {
	display     : flex;
	align-items : center;
	background  : #fff;
	border      : 1px solid #d4d4d4;
}
.formula input {
	flex      : 1;
	min-width : 0;
	padding   : 0 4px;
}
.formula .content input { padding : 0 8px; }
.namebox svg, .content svg { margin-right : 3px; }
.formula .fx {
	justify-content : space-around;
	margin-right    : 2px;
}
.dots {
	color       : #999;
	font-size   : 9px;
	line-height : 14px;
	text-align  : center;
}
.fx i {
	font-family : "Liberation Serif", serif;
	font-size   : 9px;
}
.fx small { font-size : 6px; }

/* workbook */
.work {
	flex                  : 1;
	display               : grid;
	grid-template-columns : 1fr 207px;
}
.book {
	display               : grid;
	grid-template-columns : 1fr 14px;
	grid-template-rows    : 8px 1fr 17px;
	min-width             : 0;
}
.colheads {
	display               : grid;
	grid-template-columns : var(--cols);
	overflow              : hidden;
	border-bottom         : 1px solid #9f9f9f;
	font                  : 6px/8px "Liberation Sans", Arial, sans-serif;
	color                 : #333;
	text-align            : center;
}
.colheads span {
	border-right : 1px solid #bbb;
}
.colheads .sel {
	background    : #d2d2d2;
	border-bottom : 1px solid var(--green);
	color         : var(--green);
}
.colheads .cut {
	border     : 0;
	text-align : right;
}
.sheet {
	position              : relative;
	display               : grid;
	grid-template-columns : var(--cols);
	grid-template-rows    : repeat(30, minmax(0, 1fr));
	min-height            : 250px;
	overflow              : hidden;
	background            : #fff;
	border-right          : 1px solid #aaa;
	font                  : 7px/8px var(--cells);
	color                 : #111;
}
.rowheads {
	grid-area      : 1 / 1 / -1 / 2;
	display        : flex;
	flex-direction : column;
	background     : var(--grey);
	border-right   : 1px solid #9f9f9f;
	line-height    : 7px;
	list-style     : none;
	text-align     : center;
}
.rowheads li {
	flex          : 1;
	min-height    : 0;
	border-bottom : 1px solid #cfcfcf;
}
.rowheads .sel {
	background   : #d2d2d2;
	border-right : 2px solid var(--green);
	color        : var(--green);
}
.pivot {
	display        : flex;
	flex-direction : column;
	min-width      : 0;
}
.category { grid-area : 17 / 8 / 28 / 11; }
.month { grid-area : 17 / 12 / 31 / 15; }
.pivot thead, .pivot tbody, .pivot tfoot { display : contents; }
.pivot tr {
	flex                  : 1;
	display               : grid;
	grid-template-columns : 63px 58px 126px;
	min-height            : 0;
	white-space           : nowrap;
}
.month tr { grid-template-columns : 53px 36px 37px; }
.pivot td, .pivot th {
	padding    : 0 2px;
	text-align : right;
}
.pivot td:first-child, .pivot th { text-align : left; }
.pivot thead tr, .pivot tfoot tr {
	background  : #d9e1f2;
	font-family : "Liberation Sans", Arial, sans-serif;
	font-weight : bold;
}
.pivot thead th:first-child {
	display         : flex;
	justify-content : space-between;
	padding-right   : 1px;
}
.month thead th { padding : 0 1px; }
.drop {
	width      : 8px;
	height     : 8px;
	background : #fff;
	border     : 1px solid #b5b5b5;
}
.pivot .current {
	position : relative;
	outline  : 1px solid var(--green);
}
.current::after {
	content    : "";
	position   : absolute;
	right      : -2px;
	bottom     : -2px;
	width      : 3px;
	height     : 3px;
	background : var(--green);
}

/* slicers */
.slicer {
	position              : absolute;
	top                   : 15px;
	display               : grid;
	grid-template-columns : 1fr 8px;
	grid-template-rows    : 12px 1fr;
	gap                   : 1px 1px;
	width                 : 81px;
	height                : 111px;
	padding               : 0 3px 3px;
	background            : #fff;
	border                : 1px solid #7d9fbe;
}
.assignee { left : 16px; }
.region   { left : 96px; }
.site     { left : 176px; }
.product  { left : 427px; top : 12px; }
.slicer header {
	grid-column   : 1 / -1;
	display       : flex;
	align-items   : center;
	gap           : 5px;
	border-bottom : 1px solid #7d9fbe;
}
.slicer h3 {
	flex        : 1;
	font-family : "Liberation Sans", Arial, sans-serif;
	font-weight : bold;
	white-space : nowrap;
}
.items {
	display            : grid;
	grid-template-rows : repeat(8, 1fr);
	gap                : 1px;
}
.region .items { grid-column : 1 / -1; margin-right : 2px; }
.items button {
	justify-content : flex-start;
	min-width       : 0;
	padding-left    : 3px;
	background      : #b4c6e7;
	border          : 1px solid #a3adc0;
	border-radius   : 2px;
}
.items .none {
	background   : #dde3f5;
	border-color : #ccd0dc;
	color        : #8b8f99;
}
.bar {
	display         : flex;
	flex-direction  : column;
	align-items     : center;
	background      : #f1f1f1;
	padding         : 2px 0;
}
.bar i {
	width      : 7px;
	height     : 5px;
	margin     : 3px 0 auto;
	background : #c8c8c8;
}
.bar.long i { height : 36px; margin-top : 2px; }

/* timeline */
.timeline {
	position   : absolute;
	left       : 23px;
	top        : 138px;
	width      : 147px;
	height     : 61px;
	padding    : 1px 4px 0 3px;
	background : #fff;
	border     : 1px solid #7d9fbe;
	font       : 5px/8px "DejaVu Sans", sans-serif;
}
.timeline header {
	display         : flex;
	align-items     : center;
	justify-content : space-between;
	padding-bottom  : 2px;
	border-bottom   : 2px solid #9dbcd3;
}
.timeline h3 {
	font-family : "Open Sans", sans-serif;
	font-size   : 6px;
	font-weight : bold;
}
.timeline p {
	display         : flex;
	justify-content : space-between;
	padding-top     : 1px;
	color           : #888;
}
.timeline b {
	color       : #2f6a96;
	font-weight : normal;
}
.timeline p button { gap : 3px; }
.years {
	display               : grid;
	grid-template-columns : 4px repeat(6, 1fr);
	gap                   : 1px;
	margin-top            : 10px;
	color                 : #888;
}
.blocks {
	height     : 7px;
	margin-top : 1px;
}
.blocks i { background : #d5d5d5; }
.blocks .on { background : linear-gradient(#8db7e3, #4f88c9); }
.scroll {
	display               : grid;
	grid-template-columns : 7px 1fr 7px;
	height                : 7px;
	margin-top            : 3px;
}
.scroll button { border : 1px solid #ccc; }
.scroll i {
	margin-left : 54px;
	border      : 1px solid #bbb;
}

/* scroll bars */
.vscroll, .sb {
	display        : flex;
	flex-direction : column;
	background     : #d6d6d6;
}
.vscroll {
	grid-area : 1 / 2 / 3 / 3;
	margin    : 1px 3px 0 1px;
}
.vscroll button, .vscroll i, .sb button, .sb i, .hscroll button, .hscroll i {
	background : #fff;
	border     : 1px solid #bbb;
}
.vscroll button, .sb button { height : 9px; }
.vscroll i {
	height : 78px;
	margin : 1px 0 auto;
}
.sheettabs {
	grid-column : 1 / -1;
	display     : flex;
	align-items : center;
	padding     : 0 12px 0 9px;
	border-top  : 1px solid #b5b5b5;
}
.nav {
	width     : 17px;
	color     : #aaa;
	font-size : 9px;
}
.sheet1 {
	align-self    : stretch;
	width         : 38px;
	margin        : 0 20px 1px 17px;
	background    : #fff;
	border-bottom : 2px solid var(--green);
	color         : var(--green);
	font-family   : var(--tabs);
	font-size     : 8px;
	font-weight   : bold;
}
.hscroll {
	display               : grid;
	grid-template-columns : 9px 1fr 9px;
	flex                  : 0 1 220px;
	height                : 9px;
	margin-left           : 8px;
	background            : #d6d6d6;
}
.hscroll i { margin : 0 2px 0 38px; }

/* field list */
.pane {
	display        : flex;
	flex-direction : column;
	padding        : 8px 4px 3px 3px;
	border-left    : 1px solid #ccc;
	font-family    : Lato, "Open Sans", sans-serif;
}
.pane > header {
	display     : flex;
	align-items : center;
	height      : 14px;
	padding     : 0 7px 0 4px;
	gap         : 18px;
}
.pane > header h2 {
	flex        : 1;
	color       : #3b5f4c;
	font-family : var(--ui);
	font-size   : 12px;
	line-height : 14px;
}
.frame {
	flex           : 1;
	display        : flex;
	flex-direction : column;
	padding        : 3px 2px 1px;
	border         : 3px solid #0f0;
}
.choose {
	display         : flex;
	align-items     : center;
	justify-content : space-between;
}
.choose button {
	gap        : 4px;
	width      : 26px;
	height     : 16px;
	background : #fff;
	border     : 1px solid #bbb;
}
.search {
	display     : flex;
	align-items : center;
	height      : 11px;
	margin-top  : 9px;
	background  : #fff;
	border      : 1px solid #bbb;
}
.search input {
	flex      : 1;
	min-width : 0;
}
.search input::placeholder { color : #555; }
.fields {
	position   : relative;
	display    : flex;
	height     : 64px;
	margin-top : 9px;
	overflow   : hidden;
	background : #fff;
}
.fields ul {
	flex       : 1;
	list-style : none;
}
.fields li {
	display      : flex;
	align-items  : center;
	gap          : 1px;
	height       : 11px;
	padding-left : 14px;
}
.fields .used { font-weight : bold; }
.sb { width : 9px; background : #f1f1f1; }
.fields .sb i { height : 11px; margin-bottom : auto; }
.pointer {
	position : absolute;
	left     : 68px;
	top      : 35px;
}
.frame > p { margin : 12px 2px 9px; }
.areas {
	display               : grid;
	grid-template-columns : 1fr 1fr;
	margin-left           : 2px;
}
.areas section { min-width : 0; }
.areas section:nth-child(odd) {
	padding-right : 3px;
	border-right  : 1px solid #bbb;
}
.areas section:nth-child(even) { padding-left : 2px; }
.areas section:nth-child(-n+2) {
	padding-bottom : 3px;
	border-bottom  : 1px solid #bbb;
}
.areas h3 {
	display      : flex;
	align-items  : center;
	gap          : 5px;
	height       : 15px;
	padding-left : 3px;
}
.zone {
	position    : relative;
	height      : 22px;
	padding-top : 1px;
	overflow    : hidden;
	background  : #fff;
}
.zone > button {
	justify-content : space-between;
	width           : 100%;
	height          : 12px;
	padding         : 0 4px;
	border          : 1px solid #ccc;
}
.zone.two { padding-right : 10px; }
.zone em {
	background : #f4a582;
	color      : #d33;
	font-style : normal;
}
.zone .sb {
	position : absolute;
	right    : 0;
	top      : 1px;
}
.defer {
	display         : flex;
	align-items     : center;
	justify-content : space-between;
	margin-top      : auto;
	padding-left    : 2px;
}
.defer label {
	display     : flex;
	align-items : center;
	gap         : 4px;
}
.defer input {
	appearance : none;
	width      : 8px;
	height     : 8px;
	background : #fff;
	border     : 1px solid #aaa;
}
.defer button {
	width      : 27px;
	height     : 12px;
	background : #f6f6f6;
	color      : #aaa;
}

/* status bar */
.status {
	display         : flex;
	justify-content : flex-end;
	align-items     : center;
	height          : 19px;
	padding-right   : 6px;
	background      : var(--chrome);
	border-top      : 1px solid #c9c9c9;
}
.status button {
	width  : 27px;
	height : 18px;
}
.status .on { background : #cdcdcd; }
.zoom {
	display     : flex;
	align-items : center;
	gap         : 2px;
	margin      : 0 10px 0 3px;
	font-size   : 9px;
}
.zoom input {
	appearance : none;
	width      : 60px;
	height     : 9px;
	background : linear-gradient(#999, #999) center / 100% 1px no-repeat;
}
.zoom input::-webkit-slider-thumb {
	appearance : none;
	width      : 3px;
	height     : 7px;
	background : #555;
}

/* taskbar */
.taskbar {
	display     : flex;
	align-items : stretch;
	height      : 23px;
	background  : #101010;
	color       : #eee;
}
.start { width : 28px; }
.find {
	display     : flex;
	align-items : center;
	flex        : 0 1 206px;
	gap         : 5px;
	padding     : 0 10px 0 6px;
	background  : #f2f2f2;
	color       : #333;
	font-size   : 8px;
}
.find input {
	flex      : 1;
	min-width : 0;
}
.find input::placeholder { color : #444; }
.apps {
	display : flex;
	flex    : 0 1 394px;
}
.apps button {
	flex          : 1;
	border-bottom : 1px solid transparent;
}
.apps button:first-child { flex : 0 0 28px; }
.apps svg {
	width  : 16px;
	height : 16px;
}
.apps .run { border-color : #3d8f5f; }
.apps .cur {
	background   : #3c4240;
	border-color : #4fb57e;
}
.tray {
	display       : flex;
	align-items   : center;
	gap           : 8px;
	padding-right : 11px;
	margin-right  : 2px;
	border-right  : 1px solid #555;
	text-align    : center;
}
.tray svg {
	width  : 12px;
	height : 12px;
}
.tray time { margin : 0 3px; }
```
